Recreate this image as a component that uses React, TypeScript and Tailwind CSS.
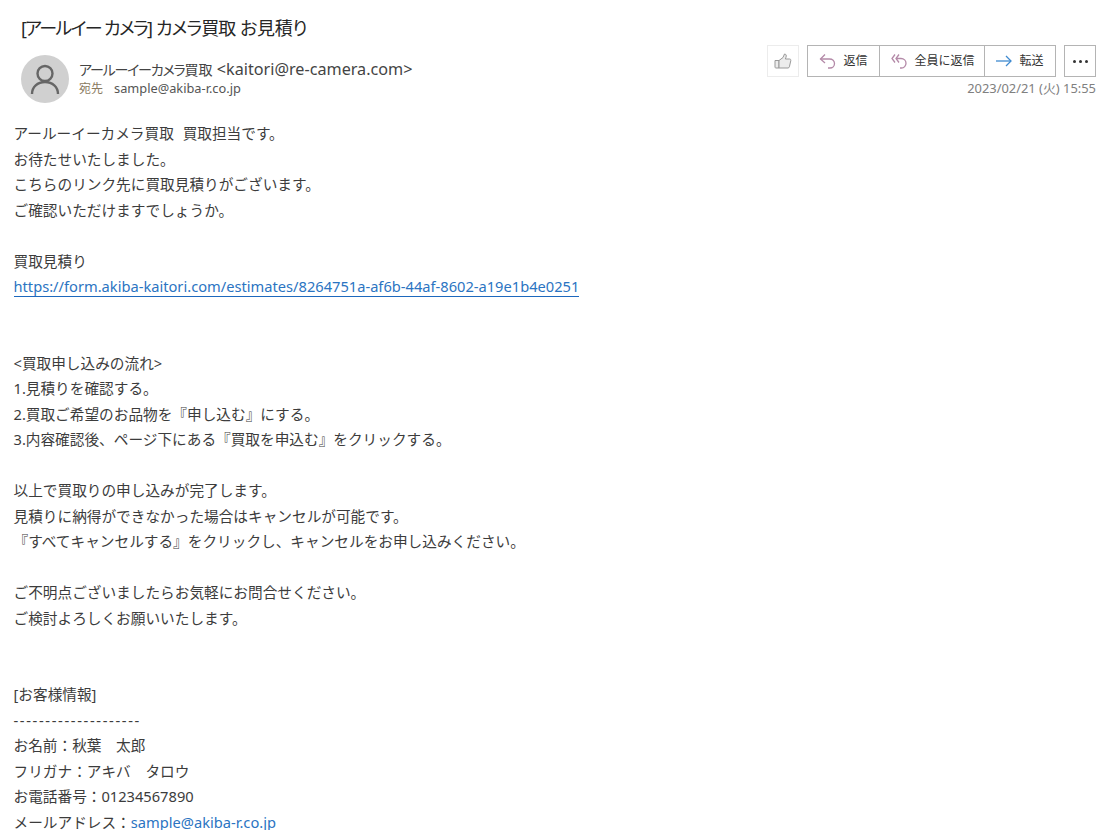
const font = "font-['Noto_Sans','Noto_Sans_CJK_JP',sans-serif]";

const linesTop = [
  'お待たせいたしました。',
  'こちらのリンク先に買取見積りがございます。',
  'ご確認いただけますでしょうか。',
  '',
  '買取見積り',
];

const linesBottom = [
  '',
  '',
  '<買取申し込みの流れ>',
  '1.見積りを確認する。',
  '2.買取ご希望のお品物を『申し込む』にする。',
  '3.内容確認後、ページ下にある『買取を申込む』をクリックする。',
  '',
  '以上で買取りの申し込みが完了します。',
  '見積りに納得ができなかった場合はキャンセルが可能です。',
  '『すべてキャンセルする』をクリックし、キャンセルをお申し込みください。',
  '',
  'ご不明点ございましたらお気軽にお問合せください。',
  'ご検討よろしくお願いいたします。',
  '',
  '',
  '[お客様情報]',
];

const linesInfo = ['お名前：秋葉　太郎', 'フリガナ：アキバ　タロウ', 'お電話番号：01234567890'];

function Line({ text }: { text: string }) {
  return <div className="h-[25.5px] whitespace-pre">{text}</div>;
}

function ReplyIcon() {
  return (
    <svg width="17" height="16" viewBox="0 0 17 16" fill="none" stroke="#b48aa8" strokeWidth="1.3">
      <path d="M6 1.5 1.5 6 6 10" />
      <path d="M1.5 6H10.5C13.5 6 15.5 8 15.5 10.5C15.5 13 13.5 15 11 15H9" />
    </svg>
  );
}

function ReplyAllIcon() {
  return (
    <svg width="18" height="16" viewBox="0 0 18 16" fill="none" stroke="#b48aa8" strokeWidth="1.3">
      <path d="M6 1.5 3 5.5 6 9.5" />
      <path d="M10 1.5 7 5.5 10 9.5" />
      <path d="M7 5.5H12C15 5.5 17 7.8 17 10.3C17 12.8 15 15 12.5 15H11" />
    </svg>
  );
}

function ForwardIcon() {
  return (
    <svg width="16" height="12" viewBox="0 0 16 12" fill="none" stroke="#3f8ad0" strokeWidth="1.3">
      <path d="M0 6H15" />
      <path d="M10 1l5 5-5 5" />
    </svg>
  );
}

function LikeIcon() {
  return (
    <svg width="18" height="16" viewBox="0 0 18 16" fill="#ececec" stroke="#999999" strokeWidth="1">
      <path d="M1 7.5H5V15H1.8C1.4 15 1 14.6 1 14.2Z" />
      <path d="M5 7.5L9 4.5L10.5 1C12.2 1 12.6 2.6 12 4.2L11.4 6H15.6C16.6 6 17 6.8 16.8 7.6L15.4 13.8C15.2 14.5 14.7 15 14 15H5Z" />
    </svg>
  );
}

function Avatar() {
  return (
    <div className="w-12 h-12 rounded-full bg-[#d0d0d0] flex items-center justify-center shrink-0">
      <svg width="30" height="32" viewBox="0 0 30 32" fill="none" stroke="#666666" strokeWidth="2.4">
        <circle cx="15" cy="10.5" r="7.5" />
        <path d="M2 31C2 24 7.5 19 15 19C22.5 19 28 24 28 31" />
      </svg>
    </div>
  );
}

export default function App() {
  return (
    <div className={`w-[1100px] h-[830px] overflow-hidden bg-white text-[#3c3c3c] ${font}`}>
      <div className="pl-[21px] pt-[14px] h-[55px] text-[18px] leading-[28px] text-[#262626] [font-feature-settings:'palt']">
        <span className="tracking-[-1.65px]">[アールイー カメラ]</span>{' '}
        <span className="tracking-[-0.9px]">カメラ買取</span> <span className="tracking-[-0.3px]">お見積り</span>
      </div>

      <div className="flex justify-between pl-[21px] pr-1 h-[65px]">
        <div className="flex gap-[10px]">
          <Avatar />
          <div className="pt-[3px]">
            <div className="text-[16.2px] leading-[22px] text-[#444444]">
              <span className="text-[14px] tracking-[-1.2px] [font-feature-settings:'palt']">アールーイーカメラ</span>
              <span className="text-[14px]">買取</span>
              <span> &lt;kaitori@re-camera.com&gt;</span>
            </div>
            <div className="text-[12.8px] leading-[15px] text-[#555555]">
              <span className="text-[12px] text-[#8a7a60] mr-[11px]">宛先</span>sample@akiba-r.co.jp
            </div>
          </div>
        </div>

        <div className="flex flex-col items-end">
          <div className="flex h-[32px] -mt-[10px]">
            <div className="w-8 border border-[#ececec] flex items-center justify-center mr-2">
              <LikeIcon />
            </div>
            <div className="flex border border-[#b4b4b4] text-[12px] text-[#333333]">
              <div className="w-[72px] flex items-center justify-center gap-[7px] border-r border-[#b4b4b4]">
                <ReplyIcon />
                返信
              </div>
              <div className="w-[105px] flex items-center justify-center gap-[7px] border-r border-[#b4b4b4]">
                <ReplyAllIcon />
                全員に返信
              </div>
              <div className="w-[70px] flex items-center justify-center gap-[7px]">
                <ForwardIcon />
                転送
              </div>
            </div>
            <div className="w-8 ml-2 border border-[#b4b4b4] flex items-center justify-center gap-[3px]">
              <span className="w-[3px] h-[3px] rounded-full bg-[#333333]" />
              <span className="w-[3px] h-[3px] rounded-full bg-[#333333]" />
              <span className="w-[3px] h-[3px] rounded-full bg-[#333333]" />
            </div>
          </div>
          <div className="text-[12.9px] leading-[22px] text-[#808080]">2023/02/21 (火) 15:55</div>
        </div>
      </div>

      <div className="pl-[13.5px] pt-[2px] text-[14.67px]">
        <div className="h-[25.5px] whitespace-pre [word-spacing:5px]">アールーイーカメラ買取 買取担当です。</div>
        {linesTop.map((l, i) => (
          <Line key={i} text={l} />
        ))}
        <div className="h-[25.5px]">
          <a className="text-[#2b74c2] border-b border-[#1d68bd]">
            https://form.akiba-kaitori.com/estimates/8264751a-af6b-44af-8602-a19e1b4e0251
          </a>
        </div>
        {linesBottom.map((l, i) => (
          <Line key={i} text={l} />
        ))}
        <div className="h-[25.5px] tracking-[1.65px]">--------------------</div>
        {linesInfo.map((l, i) => (
          <Line key={i} text={l} />
        ))}
        <div className="h-[25.5px]">
          メールアドレス：<span className="text-[#2b74c2]">sample@akiba-r.co.jp</span>
        </div>
      </div>
    </div>
  );
}
